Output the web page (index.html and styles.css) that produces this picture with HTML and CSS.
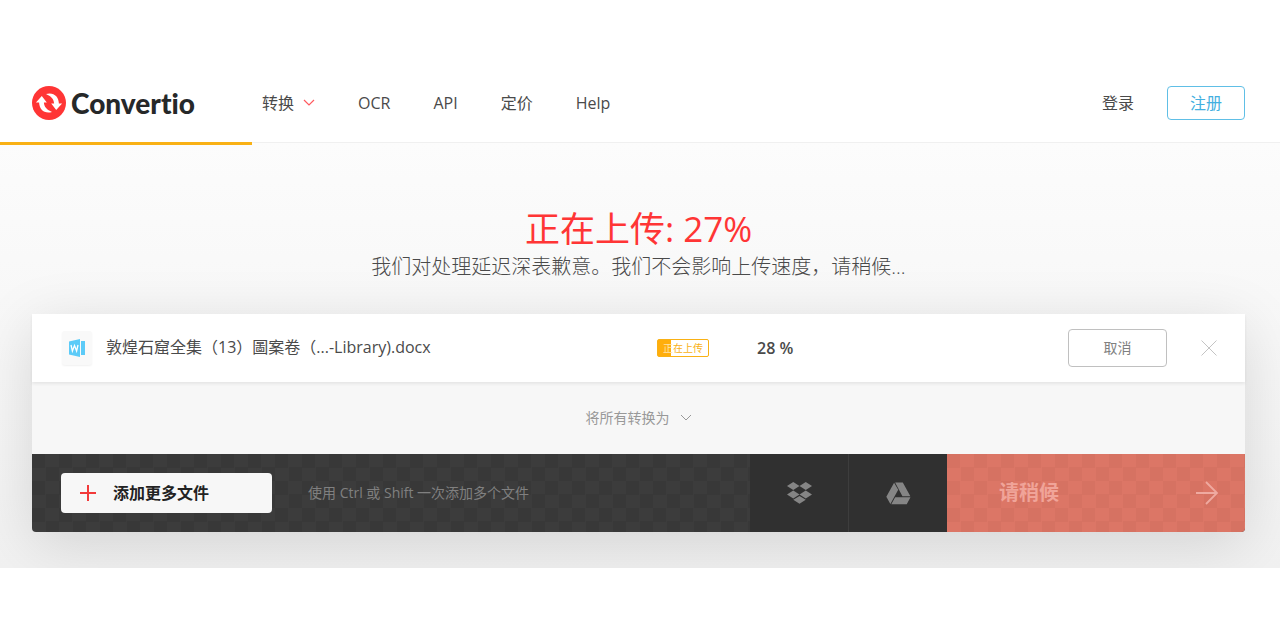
FILE: index.html
```html
<!DOCTYPE html>
<html lang="zh-CN">
<head>
<meta charset="utf-8">
<meta name="viewport" content="width=device-width, initial-scale=1">
<title>Convertio</title>
<link rel="stylesheet" href="styles.css">
</head>
<body>
<div class="page">
  <header class="header">
    <a class="logo" href="#">
      <svg class="logo-mark" viewBox="0 0 34 34" aria-hidden="true">
        <circle cx="17" cy="17" r="17" fill="#ff3535"/>
        <path fill="#fff" d="M3.900 16.500 9.800 9.900l5 6.600h-2.900c.2 4.500 3.100 7.200 8.100 9.500C12.400 28.200 7.300 23.500 7.100 16.500z"/>
        <path fill="#fff" d="M30.100 17.500 24.200 24.100l-5-6.600h2.900c-.2-4.500-3.100-7.200-8.100-9.500 7.600-2.200 12.700 2.500 12.900 9.500z"/>
      </svg>
      <span class="logo-text">Convertio</span>
    </a>
    <nav class="nav">
      <a class="nav-link" href="#">转换
        <svg class="caret" viewBox="0 0 12 8" aria-hidden="true"><path d="M1 1l5 5 5-5" fill="none" stroke="#ff5a5f" stroke-width="1.200"/></svg>
      </a>
      <a class="nav-link" href="#">OCR</a>
      <a class="nav-link" href="#">API</a>
      <a class="nav-link" href="#">定价</a>
      <a class="nav-link" href="#">Help</a>
    </nav>
    <div class="account">
      <a class="nav-link" href="#">登录</a>
      <a class="signup" href="#">注册</a>
    </div>
  </header>
  <main class="main">
    <div class="progress" style="width: 19.660%"></div>
    <h1 class="title">正在上传: 27%</h1>
    <p class="subtitle">我们对处理延迟深表歉意。我们不会影响上传速度，请稍候...</p>
    <section class="panel">
      <div class="file">
        <div class="file-icon">
          <svg viewBox="0 0 18 20" aria-hidden="true">
            <path d="M1 3.500 12 1v18L1 16.500z" fill="#5ccbf8"/>
            <path d="M13 3h4v14h-4z" fill="#5ccbf8"/>
            <path d="M3 7l1.400 6L6.500 7.500 8.600 13 10 7" fill="none" stroke="#fff" stroke-width="1.300"/>
          </svg>
        </div>
        <span class="file-name">敦煌石窟全集（13）圖案卷（...-Library).docx</span>
        <div class="file-status"><span class="badge">正在上传</span></div>
        <span class="percent">28 %</span>
        <button class="cancel" type="button">取消</button>
        <button class="remove" type="button" aria-label="移除">
          <svg viewBox="0 0 16 16" aria-hidden="true"><path d="M.5.5l15 15M15.500.5l-15 15" fill="none" stroke="#c4c4c4"/></svg>
        </button>
      </div>
      <button class="convert-all" type="button">将所有转换为
        <svg class="caret" viewBox="0 0 12 8" aria-hidden="true"><path d="M1 1l5 5 5-5" fill="none" stroke="#999"/></svg>
      </button>
      <div class="actions">
        <div class="add-area">
          <button class="add" type="button">
            <svg class="plus" viewBox="0 0 16 16" aria-hidden="true"><path d="M8 0v16M0 8h16" fill="none" stroke="#f23a3a" stroke-width="2"/></svg>
            添加更多文件
          </button>
          <span class="hint">使用 Ctrl 或 Shift 一次添加多个文件</span>
        </div>
        <button class="source" type="button" aria-label="Dropbox">
          <svg viewBox="0 0 24 22" aria-hidden="true" fill="#858585"><path d="M6 0l6 3.800-6 3.800-6-3.800zM18 0l6 3.800-6 3.800-6-3.800zM6 8.200l6 3.800-6 3.800L0 12zM18 8.200l6 3.800-6 3.800-6-3.800zM12 13.300l6 3.800-6 3.800-6-3.800z"/></svg>
        </button>
        <button class="source" type="button" aria-label="Google Drive">
          <svg viewBox="0 0 26 24" aria-hidden="true" fill="#858585"><path d="M8.400.9l4.300 7.300L4.500 23 .3 15.300zM9.500.5h8l7.900 14.300h-8.300zM9.500 15.900h16L21.600 23.300H5.500z"/></svg>
        </button>
        <button class="wait" type="button">
          <span>请稍候</span>
          <svg viewBox="0 0 24 24" aria-hidden="true"><path d="M1 12h21M11 1l11 11-11 11" fill="none" stroke="#efaaa0" stroke-width="1.800"/></svg>
        </button>
      </div>
    </section>
  </main>
</div>
</body>
</html>
```
FILE: styles.css
```css
* { box-sizing: border-box; }

body {
  margin: 0;
  background: #fff;
  color: #4a4a4a;
  font: 16px/24px "Open Sans", "Noto Sans CJK SC", sans-serif;
}

button { border: 0; padding: 0; font: inherit; }
a { color: inherit; text-decoration: none; }
svg { display: block; flex: none; }

.page { padding: 64px 0 72px; }

.header {
  display: flex;
  align-items: center;
  height: 78px;
  padding: 0 35px 0 32px;
}
.logo { display: flex; align-items: center; gap: 5px; width: 230px; }
.logo-mark { width: 34px; height: 34px; }
.logo-text {
  color: #262829;
  font: 900 28px/32px Lato, sans-serif;
  font-variant-ligatures: none;
}
.nav { display: flex; gap: 43px; }
.nav-link { display: flex; align-items: center; gap: 9px; }
.caret { width: 12px; height: 8px; }
.account { display: flex; align-items: center; gap: 33px; margin-left: auto; }
.signup {
  padding: 4px 22px;
  border: 1px solid #60bfe6;
  border-radius: 4px;
  color: #43afe0;
}

.main {
  position: relative;
  overflow: hidden;
  padding: 64px 35px 36px 32px;
  background: linear-gradient(#fcfcfc, #f1f1f1);
  box-shadow: inset 0 1px 0 #f0f0f0;
}
.progress {
  position: absolute;
  top: 0;
  left: 0;
  height: 3px;
  background: #f9b115;
}
.title {
  margin: 0;
  color: #ff3535;
  font-size: 35px;
  font-weight: 400;
  line-height: 46px;
  text-align: center;
}
.subtitle {
  margin: 0 0 32px;
  font-size: 20px;
  font-weight: 300;
  line-height: 30px;
  text-align: center;
}

.panel {
  border-radius: 4px;
  box-shadow: 0 12px 60px rgba(0, 0, 0, .13);
}
.file {
  position: relative;
  display: flex;
  align-items: center;
  height: 68px;
  padding: 0 28px 0 30px;
  background: #fff;
  box-shadow: 0 2px 3px rgba(0, 0, 0, .07);
}
.file-icon {
  display: flex;
  align-items: center;
  justify-content: center;
  width: 30px;
  height: 34px;
  margin-right: 14px;
  border-radius: 3px;
  background: #f9f9f9;
  box-shadow: 0 1px 2px rgba(0, 0, 0, .06);
}
.file-icon svg { width: 18px; height: 20px; }
.file-name { flex: 551; padding-bottom: 3px; white-space: nowrap; }
.file-status { display: flex; width: 100px; }
.badge {
  padding: 0 5px;
  border: 1px solid #f9b115;
  border-radius: 2px;
  background: linear-gradient(90deg, #ffae0c 27%, #fff 27%) border-box;
  color: #f9b115;
  font-size: 10px;
  line-height: 16px;
}
.badge::first-letter { color: #ffe3a8; }
.percent { flex: 311; font-weight: 600; }
.cancel {
  width: 99px;
  height: 38px;
  border: 1px solid #c0c0c0;
  border-radius: 4px;
  background: #fff;
  color: #808080;
  font-size: 14px;
}
.remove { margin-left: 34px; background: none; }
.remove svg { width: 16px; height: 16px; }

.convert-all {
  display: flex;
  align-items: center;
  justify-content: center;
  gap: 10px;
  width: 100%;
  height: 72px;
  background: #f7f7f7;
  color: #999;
  font-size: 14px;
}

.actions {
  display: flex;
  height: 78px;
  overflow: hidden;
  border-radius: 0 0 4px 4px;
  background: repeating-conic-gradient(#3c3c3c 0 25%, #383838 0 50%) 0 0 / 27px 27px;
}
.add-area { display: flex; flex: 1; align-items: center; padding-left: 29px; gap: 36px; }
.add {
  display: flex;
  align-items: center;
  gap: 17px;
  width: 211px;
  height: 40px;
  padding-left: 19px;
  border-radius: 4px;
  background: #f7f7f7;
  color: #222;
  font-weight: 700;
}
.plus { width: 16px; height: 16px; }
.hint { color: #808080; font-size: 14px; }
.source {
  display: flex;
  align-items: center;
  justify-content: center;
  width: 98px;
  background: #303030;
}
.source + .source { border-left: 1px solid #3d3d3d; width: 99px; }
.source svg { width: 25px; height: 23px; }
.wait {
  display: flex;
  align-items: center;
  justify-content: space-between;
  width: 298px;
  padding: 0 26px 0 52px;
  background: repeating-conic-gradient(#dc7666 0 25%, #d67262 0 50%) 0 0 / 27px 27px;
  color: #f0a499;
  font-size: 20px;
  font-weight: 700;
}
.wait svg { width: 24px; height: 24px; }
```
